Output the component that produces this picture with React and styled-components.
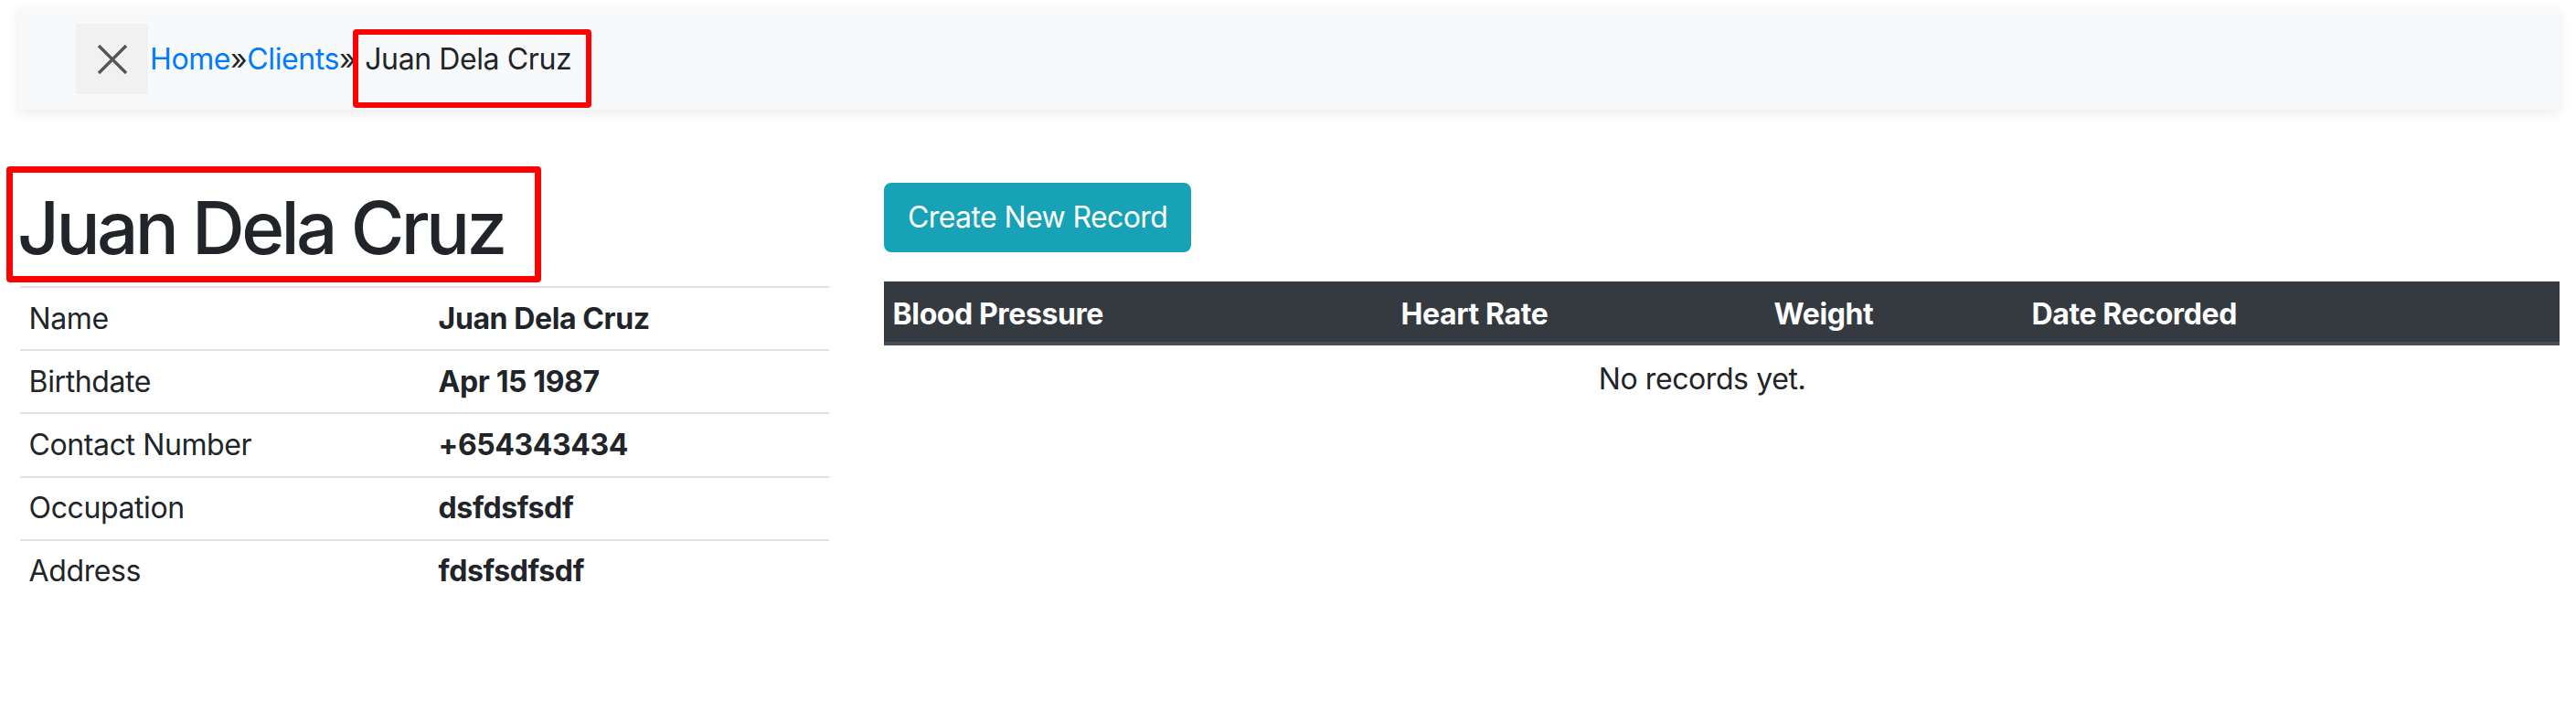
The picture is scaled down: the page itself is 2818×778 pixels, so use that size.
import React from "react";
import styled, { createGlobalStyle } from "styled-components";

const GlobalStyle = createGlobalStyle`
  body {
    margin: 0;
    background: #fff;
    color: #212529;
    font-family: Inter, "Noto Sans", "Liberation Sans", sans-serif;
    font-size: 32px;
    line-height: 48px;
    letter-spacing: -0.4px;
  }
`;

const Navbar = styled.nav`
  margin: 9px 18px 0 20px;
  height: 111px;
  background: #f8f9fa;
  box-shadow: 0 4px 14px rgba(0, 0, 0, 0.08);
  display: flex;
  align-items: center;
  padding-left: 63px;
`;

const CloseButton = styled.button`
  width: 79px;
  height: 77px;
  border: none;
  background: #f1f1f1;
  display: flex;
  align-items: center;
  justify-content: center;
  padding: 0;
  margin-right: 2px;
`;

const Crumbs = styled.div`
  display: flex;
  align-items: center;
`;

const CrumbLink = styled.a`
  color: #007bff;
  text-decoration: none;
`;

const Sep = styled.span`
  color: #212529;
`;

// red annotation frame drawn over an element
const Marked = styled.span`
  position: relative;
  margin-left: ${(p) => p.$gap || 0}px;
  &::after {
    content: "";
    position: absolute;
    left: ${(p) => p.$l}px;
    right: ${(p) => p.$r}px;
    top: ${(p) => p.$t}px;
    bottom: ${(p) => p.$b}px;
    border: ${(p) => p.$w}px solid #ff0000;
    border-radius: 4px;
    pointer-events: none;
  }
`;

const Page = styled.div`
  display: grid;
  grid-template-columns: 885px 1fr;
  column-gap: 60px;
  padding: 80px 18px 0 22px;
`;

const LeftCol = styled.div`
  display: flex;
  flex-direction: column;
`;

const Heading = styled.h1`
  align-self: flex-start;
  margin: 1px 0 16px -3px;
  font-size: 80px;
  line-height: 96px;
  font-weight: 500;
  letter-spacing: -3.6px;
  position: relative;
`;

const InfoTable = styled.table`
  width: 100%;
  border-collapse: collapse;
  table-layout: fixed;
  td {
    border-top: 2px solid #dee2e6;
    padding: 9.6px;
    vertical-align: top;
  }
`;

const Value = styled.td`
  font-weight: 700;
`;

const RightCol = styled.div`
  display: flex;
  flex-direction: column;
  align-items: flex-start;
`;

const InfoButton = styled.button`
  font-family: inherit;
  font-size: 32px;
  line-height: 48px;
  letter-spacing: -0.6px;
  color: #fff;
  background: #17a2b8;
  border: 2px solid #17a2b8;
  border-radius: 8px;
  padding: 12px 24px;
  margin-bottom: 32px;
`;

const RecordTable = styled.table`
  width: 100%;
  border-collapse: collapse;
  table-layout: fixed;
  th {
    background: #343a40;
    color: #fff;
    font-weight: 700;
    text-align: left;
    padding: 12px 9.6px 6px;
    border-bottom: 4px solid #454d55;
  }
`;

const EmptyCell = styled.td`
  text-align: center;
  padding: 13px 9.6px 9.6px;
`;

const XIcon = () => (
  <svg width="34" height="32" viewBox="0 0 34 32">
    <path d="M2 1 L32 31 M32 1 L2 31" stroke="#555" strokeWidth="3.4" fill="none" />
  </svg>
);

const info = [
  ["Name", "Juan Dela Cruz"],
  ["Birthdate", "Apr 15 1987"],
  ["Contact Number", "+654343434"],
  ["Occupation", "dsfdsfsdf"],
  ["Address", "fdsfsdfsdf"],
];

// last column is the (empty) actions column
const cols = [
  ["Blood Pressure", 556],
  ["Heart Rate", 408],
  ["Weight", 282],
  ["Date Recorded", 544],
  ["", 43],
];

export default function App() {
  return (
    <>
      <GlobalStyle />
      <Navbar>
        <CloseButton aria-label="close">
          <XIcon />
        </CloseButton>
        <Crumbs>
          <CrumbLink href="#">Home</CrumbLink>
          <Sep>»</Sep>
          <CrumbLink href="#">Clients</CrumbLink>
          <Sep>»</Sep>
          <Marked $gap={10} $l={-13} $r={-22} $t={-9} $b={-29} $w={6}>
            Juan Dela Cruz
          </Marked>
        </Crumbs>
      </Navbar>
      <Page>
        <LeftCol>
          <Heading>
            <Marked $l={-12} $r={-40} $t={-18} $b={-12} $w={7}>
              Juan Dela Cruz
            </Marked>
          </Heading>
          <InfoTable>
            <colgroup>
              <col style={{ width: 448 }} />
              <col />
            </colgroup>
            <tbody>
              {info.map(([k, v]) => (
                <tr key={k}>
                  <td>{k}</td>
                  <Value>{v}</Value>
                </tr>
              ))}
            </tbody>
          </InfoTable>
        </LeftCol>
        <RightCol>
          <InfoButton>Create New Record</InfoButton>
          <RecordTable>
            <colgroup>
              {cols.map(([c, w], i) => (
                <col key={i} style={{ width: w }} />
              ))}
            </colgroup>
            <thead>
              <tr>
                {cols.map(([c], i) => (
                  <th key={i}>{c}</th>
                ))}
              </tr>
            </thead>
            <tbody>
              <tr>
                <EmptyCell colSpan={4}>No records yet.</EmptyCell>
              </tr>
            </tbody>
          </RecordTable>
        </RightCol>
      </Page>
    </>
  );
}
